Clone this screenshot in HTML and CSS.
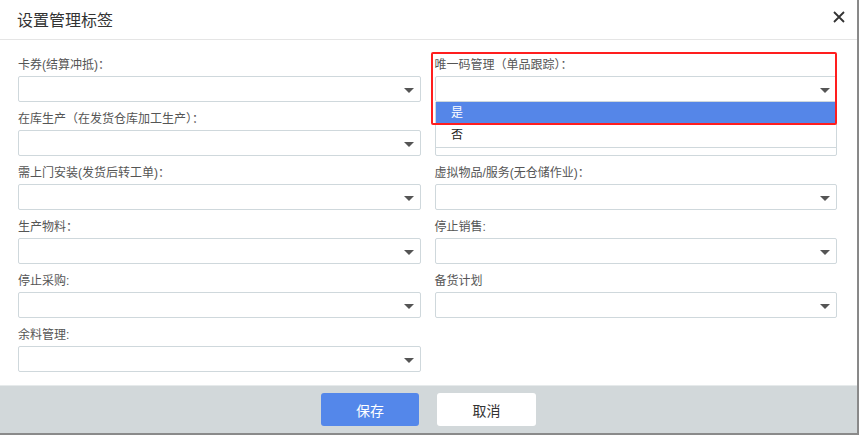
FILE: index.html
```html
<!DOCTYPE html>
<html lang="zh-CN">
<head>
  <meta charset="UTF-8">
  <title>设置管理标签</title>
  <link rel="stylesheet" href="styles.css">
</head>
<body>

<div class="dialog">
  <div class="dialog-header">
    <h1>设置管理标签</h1>
    <span class="close-btn">
      <svg width="12" height="12" viewBox="0 0 12 12"><path d="M1 1L11 11M11 1L1 11" stroke="#333" stroke-width="1.8"/></svg>
    </span>
  </div>

  <div class="dialog-body">
    <div class="form-grid">
      <div class="form-group">
        <label>卡券(结算冲抵)：</label>
        <div class="select-box"><span class="caret"></span></div>
      </div>
      <div class="form-group">
        <label>唯一码管理（单品跟踪）：</label>
        <div class="select-box"><span class="caret"></span></div>
      </div>

      <div class="form-group">
        <label>在库生产（在发货仓库加工生产）：</label>
        <div class="select-box"><span class="caret"></span></div>
      </div>
      <div class="form-group">
        <!-- label covered by the open dropdown -->
        <label>&nbsp;</label>
        <div class="select-box"><span class="caret"></span></div>
      </div>

      <div class="form-group">
        <label>需上门安装(发货后转工单)：</label>
        <div class="select-box"><span class="caret"></span></div>
      </div>
      <div class="form-group">
        <label>虚拟物品/服务(无仓储作业)：</label>
        <div class="select-box"><span class="caret"></span></div>
      </div>

      <div class="form-group">
        <label>生产物料：</label>
        <div class="select-box"><span class="caret"></span></div>
      </div>
      <div class="form-group">
        <label>停止销售:</label>
        <div class="select-box"><span class="caret"></span></div>
      </div>

      <div class="form-group">
        <label>停止采购:</label>
        <div class="select-box"><span class="caret"></span></div>
      </div>
      <div class="form-group">
        <label>备货计划</label>
        <div class="select-box"><span class="caret"></span></div>
      </div>

      <div class="form-group">
        <label>余料管理:</label>
        <div class="select-box"><span class="caret"></span></div>
      </div>
    </div>

    <!-- open dropdown of 唯一码管理 -->
    <ul class="dropdown-list">
      <li class="active">是</li>
      <li>否</li>
    </ul>
    <div class="highlight-box"></div>
  </div>

  <div class="dialog-footer">
    <button class="btn btn-primary">保存</button>
    <button class="btn btn-default">取消</button>
  </div>
</div>

</body>
</html>
```

FILE: styles.css
```css
body {
  margin: 0;
  font-family: "Liberation Sans", "Noto Sans CJK SC", sans-serif;
  background-color: #888;
  width: 859px;
  height: 435px;
  overflow: hidden;
}
.dialog {
  width: 857px;
  height: 433px;
  background: white;
  display: flex;
  flex-direction: column;
  border-right: 1px solid #8a8a8a;
  border-bottom: 2px solid #8a8a8a;
}
.dialog-header {
  height: 39px;
  border-bottom: 1px solid #e5e5e5;
  display: flex;
  align-items: center;
  justify-content: space-between;
  padding: 0 12px 0 17px;
}
.dialog-header h1 {
  margin: 0 0 2px;
  font-size: 16px;
  font-weight: normal;
  color: #333;
}
.close-btn {
  display: flex;
  margin-bottom: 5px;
}
.dialog-body {
  position: relative;
  flex: 1;
  padding: 16px 20px 0 18px;
}
.form-grid {
  display: grid;
  grid-template-columns: 1fr 1fr;
  column-gap: 14px;
  row-gap: 8px;
}
.form-group label {
  display: block;
  height: 18px;
  line-height: 18px;
  font-size: 12px;
  color: #555;
  margin-bottom: 2px;
}
.select-box {
  height: 24px;
  border: 1px solid #cfd8dc;
  border-radius: 2px;
  display: flex;
  align-items: center;
  justify-content: flex-end;
  padding-right: 6px;
}
.caret {
  width: 0;
  height: 0;
  border-left: 5px solid transparent;
  border-right: 5px solid transparent;
  border-top: 5px solid #555;
  margin-top: 2px;
}
.dropdown-list {
  position: absolute;
  left: 435px;
  top: 62px;
  width: 400px;
  margin: 0;
  padding: 0;
  list-style: none;
  background: white;
  border: 1px solid #cfd8dc;
  border-top: none;
  font-size: 12px;
}
.dropdown-list li {
  height: 22px;
  line-height: 22px;
  padding-left: 15px;
  color: #222;
}
.dropdown-list li + li {
  height: 23px;
  line-height: 23px;
}
.dropdown-list li.active {
  background-color: #5586e8;
  color: white;
}
.highlight-box {
  position: absolute;
  left: 431px;
  top: 12px;
  width: 402px;
  height: 69px;
  border: 2px solid #ff1e1e;
  border-radius: 2px;
}
.dialog-footer {
  height: 47px;
  border-top: 1px solid #e6eaeb;
  background-color: #d2d8da;
  display: flex;
  align-items: center;
  justify-content: center;
  gap: 18px;
}
.btn {
  width: 98px;
  height: 33px;
  border: none;
  border-radius: 3px;
  font-family: "Liberation Sans", "Noto Sans CJK SC", sans-serif;
  font-size: 14px;
  cursor: pointer;
}
.btn-primary {
  background-color: #5487ea;
  color: white;
}
.btn-default {
  width: 99px;
  background-color: white;
  color: #333;
}
```
